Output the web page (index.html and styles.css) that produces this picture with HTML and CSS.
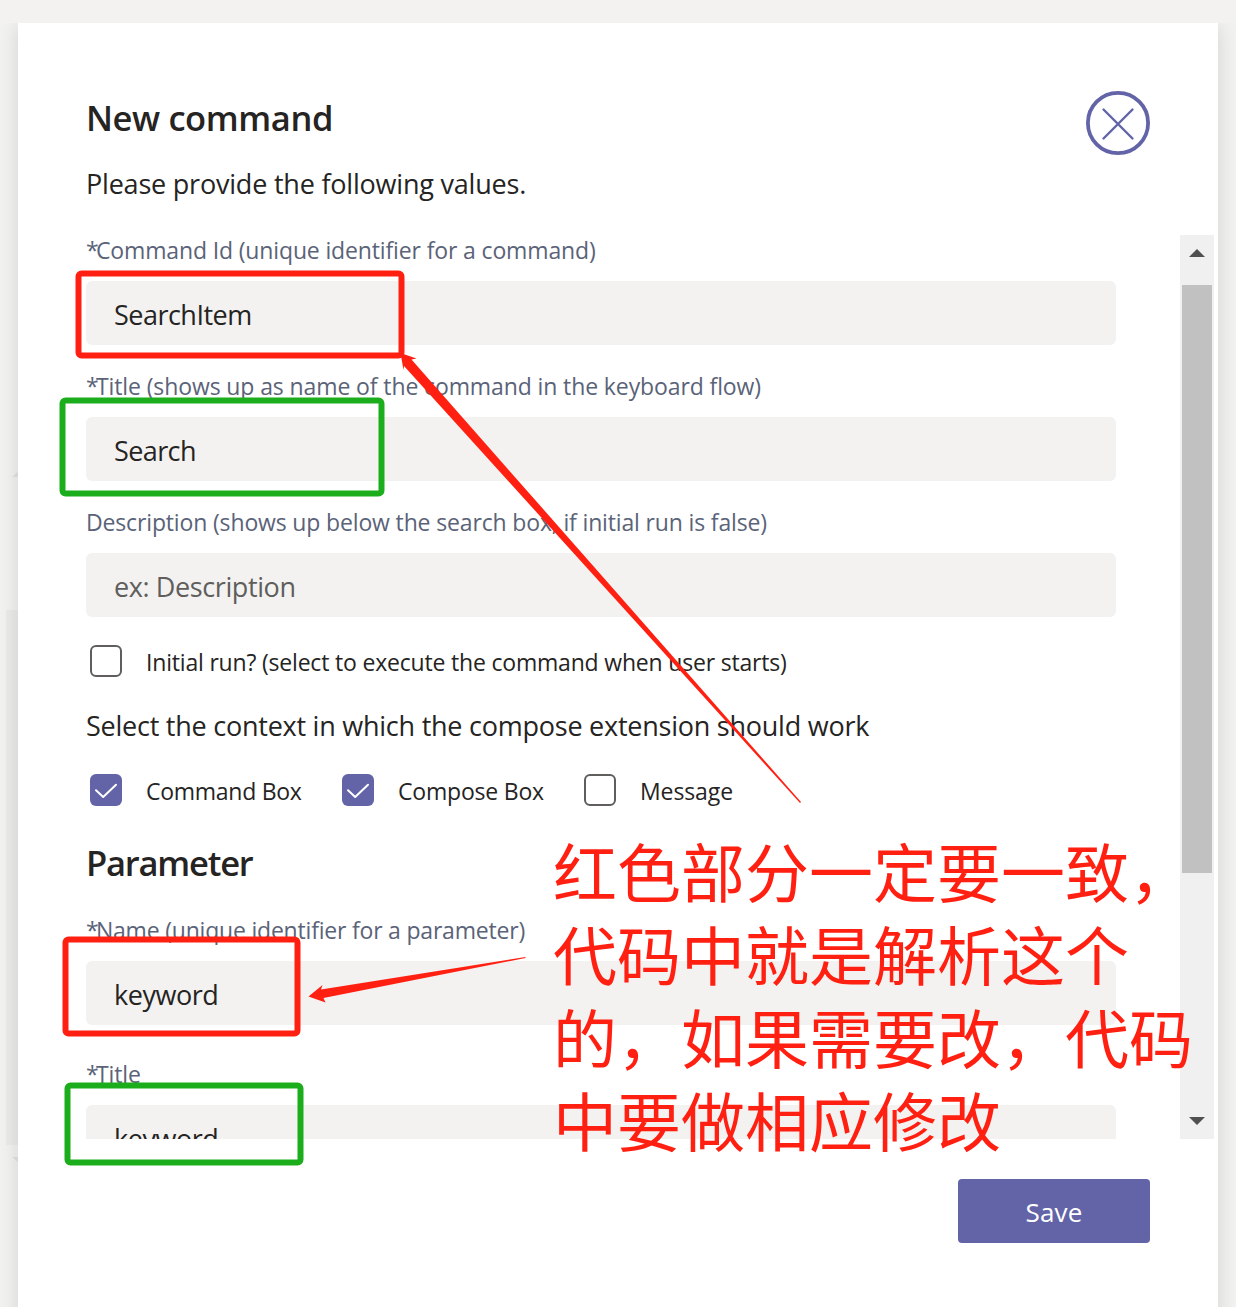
FILE: index.html
```html
<!DOCTYPE html>
<html lang="en">
<head>
<meta charset="utf-8">
<title>New command</title>
<link rel="stylesheet" href="styles.css">
</head>
<body>
<header class="topbar"></header>
<div class="stage">
  <div class="ghost-track"></div>
  <main class="dialog">
    <div class="dialog-head">
      <div>
        <h1 class="heading t-new">New command</h1>
        <p class="lead intro t-please">Please provide the following values.</p>
      </div>
      <button class="close" aria-label="Close">
        <svg width="64" height="64" viewBox="0 0 64 64" fill="none" stroke="#6264a7" stroke-linecap="round">
          <circle cx="32" cy="32" r="30.1" stroke-width="3.8"/>
          <path d="M17.500 18.500 46.500 47.500M46.500 18.500 17.500 47.500" stroke-width="2.400"/>
        </svg>
      </button>
    </div>
    <div class="scroller">
      <form class="form">
        <label class="label t-cmdid"><span class="star">*</span>Command Id (unique identifier for a command)</label>
        <div class="input"><span class="t-searchitem">SearchItem</span></div>
        <label class="label t-title"><span class="star">*</span>Title (shows up as name of the command in the keyboard flow)</label>
        <div class="input"><span class="t-search">Search</span></div>
        <label class="label t-desc">Description (shows up below the search box, if initial run is false)</label>
        <div class="input placeholder"><span class="t-ex">ex: Description</span></div>
        <div class="checks">
          <div class="check"><span class="box"></span><span class="t-initial">Initial run? (select to execute the command when user starts)</span></div>
        </div>
        <p class="lead context t-select">Select the context in which the compose extension should work</p>
        <div class="checks">
          <div class="check c-command"><span class="box on"><svg width="32" height="32" viewBox="0 0 32 32"><path d="M6 16.200 13.200 23 26 10.800"/></svg></span><span class="t-cbox">Command Box</span></div>
          <div class="check c-compose"><span class="box on"><svg width="32" height="32" viewBox="0 0 32 32"><path d="M6 16.200 13.200 23 26 10.800"/></svg></span><span class="t-compose">Compose Box</span></div>
          <div class="check"><span class="box"></span><span class="t-message">Message</span></div>
        </div>
        <h2 class="heading parameter t-param">Parameter</h2>
        <label class="label t-name"><span class="star">*</span>Name (unique identifier for a parameter)</label>
        <div class="input tall"><span class="t-keyword">keyword</span></div>
        <label class="label t-title2"><span class="star">*</span>Title</label>
        <div class="input"><span class="t-keyword">keyword</span></div>
      </form>
      <div class="scrollbar">
        <svg class="arrow" width="34" height="50" viewBox="0 0 34 50"><path d="M9 22 17 14 25 22Z"/></svg>
        <div class="thumb"></div>
        <svg class="arrow" width="34" height="34" viewBox="0 0 34 34"><path d="M9 12H25L17 20Z"/></svg>
      </div>
    </div>
    <footer class="foot"><button class="save"><span class="t-save">Save</span></button></footer>
  </main>
</div>
<svg class="markup" width="1236" height="1307" viewBox="0 0 1236 1307" fill="none">
  <path d="M12.500 477 18 471.500V477ZM12.500 1157H18V1162.500Z" fill="#d6d6d6"/>
  <g stroke-width="6">
    <rect x="78.500" y="273.500" width="323" height="82" rx="3" stroke="#ff2012"/>
    <rect x="62.500" y="400.500" width="319" height="93" rx="3" stroke="#1cad1c"/>
    <rect x="65.500" y="939.500" width="232" height="94" rx="3" stroke="#ff2012"/>
    <rect x="67.500" y="1085.500" width="233" height="77" rx="3" stroke="#1cad1c"/>
  </g>
  <g fill="#ff2012">
    <path d="M400.500 353 416.500 358.500 411.500 359.500 801 802 800 803 404 366 403.500 370Z"/>
    <path d="M308.500 996.500 322.500 985 321 989.500 525.500 957 525.500 958 323.500 998 325.500 1002.500Z"/>
  </g>
</svg>
<p class="note" lang="zh-CN">红色部分一定要一致，<br>代码中就是解析这个<br>的，如果需要改，代码<br>中要做相应修改</p>
</body>
</html>
```
FILE: styles.css
```css
* { box-sizing: border-box; }
body {
  margin: 0;
  height: 1307px;
  overflow: hidden;
  position: relative;
  background: #f3f2f1;
  color: #252423;
  font-family: "Open Sans", "Noto Sans", sans-serif;
}
h1, h2, p { margin: 0; }
button { font: inherit; border: 0; padding: 0; background: none; }
.topbar { height: 23px; background: #f3f2f1; }
.stage {
  position: relative;
  height: 1284px;
  overflow: hidden;
  padding: 0 18px;
  background: #f2f2f0;
}
.ghost-track {
  position: absolute;
  left: 6px;
  top: 587px;
  width: 12px;
  height: 535px;
  background: #ebebea;
}
.dialog {
  position: relative;
  height: 1320px;
  padding: 68px 4px 0 68px;
  background: #fff;
  box-shadow: 0 2px 20px rgba(0, 0, 0, .13);
}
.dialog-head {
  display: flex;
  justify-content: space-between;
  height: 144px;
  padding-right: 64px;
}
.heading { font-size: 35px; font-weight: 600; line-height: 54px; }
.lead { font-size: 27px; line-height: 40px; white-space: nowrap; }
.intro { margin-top: 19px; }
.close { width: 64px; height: 64px; }
.close svg { display: block; }
.scroller { display: flex; justify-content: space-between; height: 904px; overflow: hidden; }
.form { width: 1030px; }
.label {
  display: block;
  height: 32px;
  margin-bottom: 14px;
  font-size: 23px;
  line-height: 31px;
  white-space: nowrap;
  color: #5a6378;
}
.star { margin-right: -2.6px; }
.input {
  display: flex;
  align-items: center;
  height: 64px;
  margin-bottom: 26px;
  padding: 2px 28px 0;
  border-radius: 6px;
  background: #f3f2f1;
  font-size: 27px;
}
.input.tall { margin-bottom: 34px; }
.placeholder { margin-bottom: 28px; color: #605e5c; }
.checks { display: flex; height: 32px; padding-left: 4px; }
.check { display: flex; align-items: center; gap: 24px; font-size: 23px; line-height: 32px; white-space: nowrap; }
.check > span:last-child { padding-top: 1px; }
.c-command { width: 252px; }
.c-compose { width: 242px; }
.box { flex: none; width: 32px; height: 32px; border: 2px solid #605e5c; border-radius: 6px; }
.box.on { border: 0; background: #6264a7; }
.box svg { display: block; fill: none; stroke: #fff; stroke-width: 2; stroke-linecap: round; stroke-linejoin: round; }
.context { margin: 29px 0 28px; }
.parameter { margin: 30px 0 25px; }
.scrollbar { display: flex; flex-direction: column; width: 34px; background: #f0f0f0; }
.arrow { display: block; fill: #505050; flex: none; }
.thumb { height: 588px; margin: 0 2px auto; background: #c1c1c1; }
.foot { display: flex; justify-content: flex-end; padding: 40px 64px 0 0; }
.save {
  width: 192px;
  height: 64px;
  padding-top: 1px;
  border-radius: 4px;
  background: #6264a7;
  color: #fff;
  font-size: 26px;
}

/* tracking */
.t-new { font-size: 34.5px; letter-spacing: -.4px; }
.t-please { letter-spacing: -.21px; }
.t-cmdid { letter-spacing: -.14px; }
.t-title { letter-spacing: -.11px; }
.t-desc { letter-spacing: -.15px; }
.t-searchitem { letter-spacing: -.52px; }
.t-search { letter-spacing: -.6px; }
.t-ex { letter-spacing: -.4px; }
.t-initial { letter-spacing: -.19px; }
.t-select { letter-spacing: -.24px; }
.t-cbox { letter-spacing: -.27px; }
.t-compose { letter-spacing: -.2px; }
.t-message { letter-spacing: -.1px; }
.t-param { font-size: 34.5px; letter-spacing: -1.2px; }
.t-name { letter-spacing: -.2px; }
.t-title2 { letter-spacing: -.1px; }
.t-keyword { letter-spacing: -.45px; }
.t-save { letter-spacing: .2px; }

.markup { position: absolute; left: 0; top: 0; }
.note {
  position: absolute;
  left: 553px;
  top: 828px;
  color: #ff2012;
  font: 64px/83px "Noto Sans CJK SC", sans-serif;
  white-space: nowrap;
}
```
